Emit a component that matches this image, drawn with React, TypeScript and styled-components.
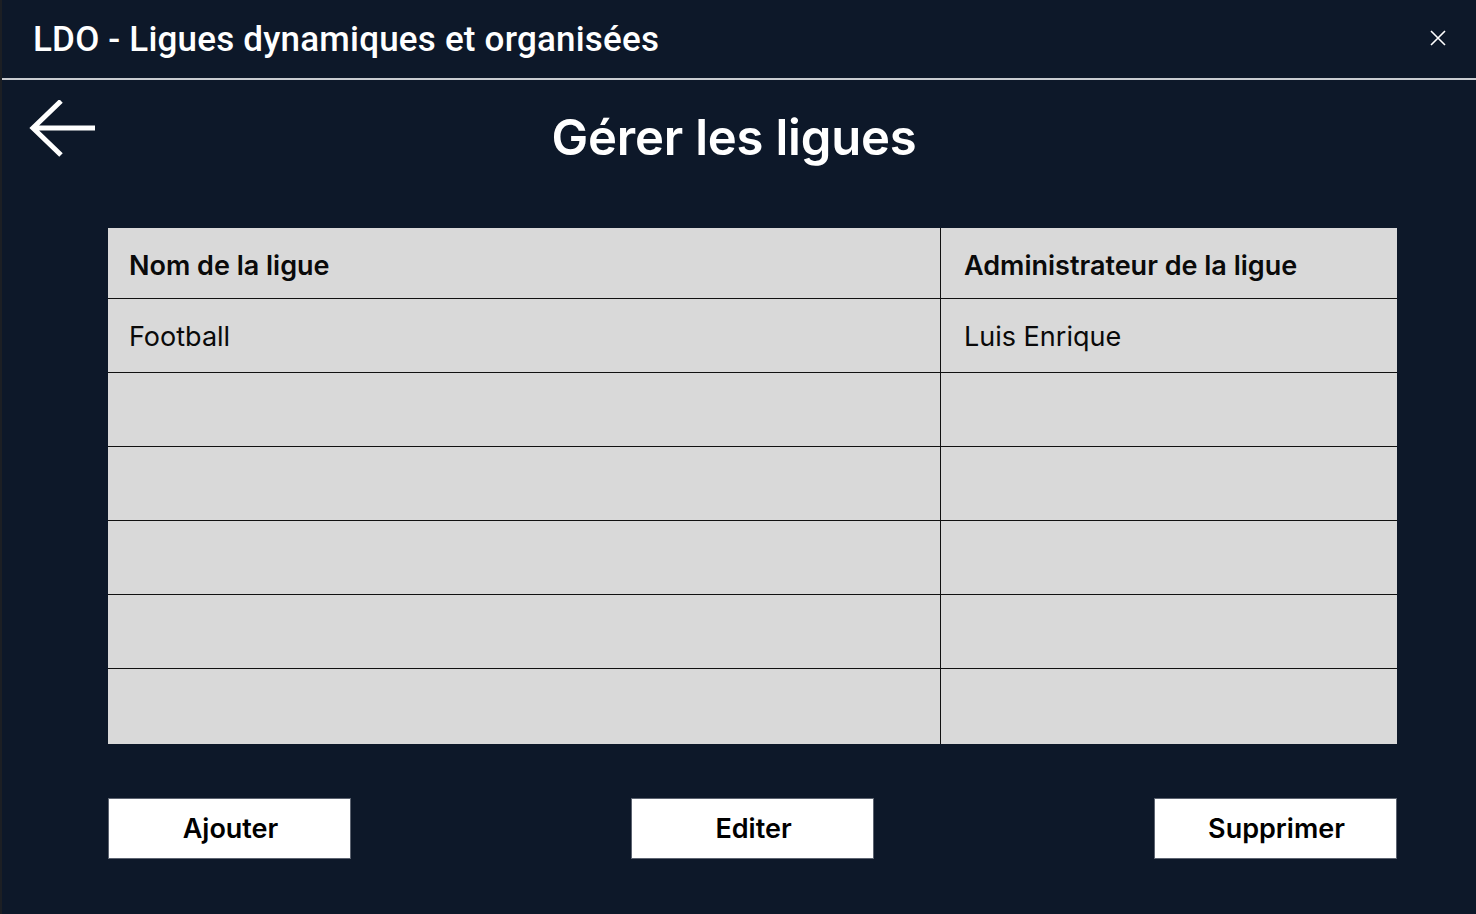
import styled, { createGlobalStyle } from 'styled-components'

const GlobalStyle = createGlobalStyle`
  html, body {
    margin: 0;
    padding: 0;
    background: #0d1829;
  }
  * {
    box-sizing: border-box;
  }
`

const Screen = styled.div`
  width: 1476px;
  height: 914px;
  background: #0d1829;
  border-left: 2px solid #1c1f24;
  display: flex;
  flex-direction: column;
  font-family: Inter, 'Noto Sans', sans-serif;
  overflow: hidden;
`

const TitleBar = styled.header`
  height: 80px;
  flex-shrink: 0;
  display: flex;
  align-items: center;
  justify-content: space-between;
  padding: 0 30px 0 31px;
  border-bottom: 2px solid #c9ccd1;
`

const AppName = styled.h1`
  margin: 0;
  color: #ffffff;
  font-family: Roboto, 'Liberation Sans', sans-serif;
  font-weight: 500;
  font-size: 35px;
  letter-spacing: 0.2px;
`

const CloseButton = styled.button`
  background: none;
  border: none;
  padding: 0;
  width: 16px;
  height: 16px;
  display: flex;
  cursor: pointer;
  margin-bottom: 2px;
`

const Content = styled.main`
  flex: 1;
  display: flex;
  flex-direction: column;
  padding: 20px 79px 0 106px;
`

// arrow on the left, title centred over the remaining width
const PageHeading = styled.div`
  display: grid;
  grid-template-columns: 1fr auto 1fr;
  align-items: start;
  height: 128px;
  margin-left: -79px;
  margin-right: -42px;
`

const BackButton = styled.button`
  background: none;
  border: none;
  padding: 0;
  width: 68px;
  height: 58px;
  cursor: pointer;
  justify-self: start;
`

const PageTitle = styled.h2`
  margin: 10px 0 0;
  color: #ffffff;
  font-family: Inter, sans-serif;
  font-weight: 600;
  font-size: 49px;
  line-height: 56px;
  letter-spacing: -0.2px;
`

const Table = styled.div`
  background: #d9d9d9;
  display: grid;
  grid-template-columns: 832px 1fr;
`

const Cell = styled.div<{ $header?: boolean; $last?: boolean; $right?: boolean }>`
  height: ${(p) => (p.$header ? '71px' : p.$last ? '75px' : '74px')};
  display: flex;
  align-items: center;
  padding-left: ${(p) => (p.$right ? '23px' : '21px')};
  border-bottom: ${(p) => (p.$last ? 'none' : '1.5px solid #111')};
  border-left: ${(p) => (p.$right ? '1.5px solid #111' : 'none')};
  color: #0a0a0a;
  font-size: 27px;
  font-weight: ${(p) => (p.$header ? 600 : 400)};
  padding-top: ${(p) => (p.$header ? '5px' : '2px')};
`

const Actions = styled.div`
  display: flex;
  justify-content: space-between;
  margin-top: 54px;
`

const ActionButton = styled.button`
  width: 243px;
  height: 61px;
  padding: 0 0 0 2px;
  background: #ffffff;
  border: 1px solid #5c6370;
  color: #000;
  font-family: Inter, sans-serif;
  font-weight: 600;
  font-size: 27px;
  cursor: pointer;
`

const leagues = [
  { name: 'Football', admin: 'Luis Enrique' },
  { name: '', admin: '' },
  { name: '', admin: '' },
  { name: '', admin: '' },
  { name: '', admin: '' },
  { name: '', admin: '' },
]

export default function App() {
  return (
    <>
      <GlobalStyle />
      <Screen>
        <TitleBar>
          <AppName>LDO - Ligues dynamiques et organisées</AppName>
          <CloseButton aria-label="Fermer">
            <svg width="16" height="16" viewBox="0 0 16 16">
              <path d="M1 1 L15 15 M15 1 L1 15" stroke="#ffffff" strokeWidth="1.6" />
            </svg>
          </CloseButton>
        </TitleBar>
        <Content>
          <PageHeading>
            <BackButton aria-label="Retour">
              <svg width="68" height="58" viewBox="0 0 68 58">
                <path
                  d="M66 28 H4 M32 1 L4 28 L32 55"
                  stroke="#ffffff"
                  strokeWidth="5"
                  fill="none"
                />
              </svg>
            </BackButton>
            <PageTitle>Gérer les ligues</PageTitle>
            <div />
          </PageHeading>
          <Table>
            <Cell $header>Nom de la ligue</Cell>
            <Cell $header $right>
              Administrateur de la ligue
            </Cell>
            {leagues.map((league, i) => {
              const last = i === leagues.length - 1
              return [
                <Cell key={`n${i}`} $last={last}>
                  {league.name}
                </Cell>,
                <Cell key={`a${i}`} $right $last={last}>
                  {league.admin}
                </Cell>,
              ]
            })}
          </Table>
          <Actions>
            <ActionButton>Ajouter</ActionButton>
            <ActionButton>Editer</ActionButton>
            <ActionButton>Supprimer</ActionButton>
          </Actions>
        </Content>
      </Screen>
    </>
  )
}
